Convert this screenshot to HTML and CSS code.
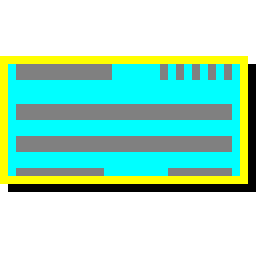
FILE: index.html
```html
<!DOCTYPE html>
<html>
<head>
<meta charset="utf-8">
<link rel="stylesheet" href="styles.css">
</head>
<body>
<div class="card">
  <div class="row top">
    <div class="bar title"></div>
    <div class="dots">
      <div class="dot"></div>
      <div class="dot"></div>
      <div class="dot"></div>
      <div class="dot"></div>
      <div class="dot"></div>
    </div>
  </div>
  <div class="bar line"></div>
  <div class="bar line"></div>
  <div class="row foot">
    <div class="bar foot-left"></div>
    <div class="bar foot-right"></div>
  </div>
</div>
</body>
</html>
```
FILE: styles.css
```css
html, body {
  margin: 0;
  padding: 0;
  background: #ffffff;
}
body {
  padding-top: 56px;
  padding-bottom: 64px;
  min-height: 256px;
  box-sizing: border-box;
}
.card {
  box-sizing: content-box;
  width: 216px;
  height: 112px;
  padding: 0 8px;
  background: #00ffff;
  border: 8px solid #ffff00;
  box-shadow: 8px 8px 0 #000000;
  display: flex;
  flex-direction: column;
  gap: 16px;
}
.bar {
  background: #808080;
}
.row {
  display: flex;
  justify-content: space-between;
}
.top {
  height: 16px;
  margin-bottom: 8px;
}
.title {
  width: 96px;
  height: 16px;
}
.dots {
  display: flex;
  gap: 8px;
}
.dot {
  width: 8px;
  height: 16px;
  background: #808080;
}
.line {
  height: 16px;
}
.foot {
  height: 8px;
}
.foot-left {
  width: 88px;
  height: 8px;
}
.foot-right {
  width: 64px;
  height: 8px;
}
```
